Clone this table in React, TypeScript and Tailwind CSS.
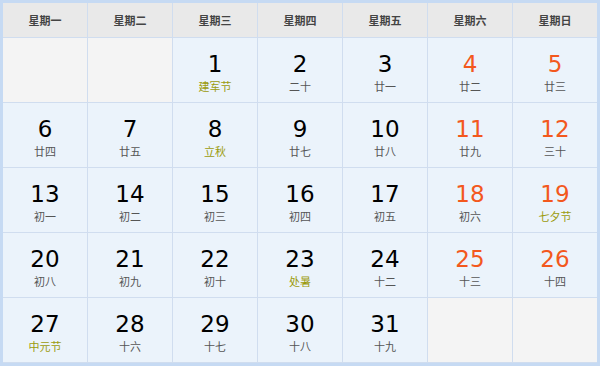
import React from "react";

type Cell = { d?: number; l?: string; fest?: boolean; wk?: boolean };

const rows: Cell[][] = [
  [{}, {}, { d: 1, l: "建军节", fest: true }, { d: 2, l: "二十" }, { d: 3, l: "廿一" }, { d: 4, l: "廿二", wk: true }, { d: 5, l: "廿三", wk: true }],
  [{ d: 6, l: "廿四" }, { d: 7, l: "廿五" }, { d: 8, l: "立秋", fest: true }, { d: 9, l: "廿七" }, { d: 10, l: "廿八" }, { d: 11, l: "廿九", wk: true }, { d: 12, l: "三十", wk: true }],
  [{ d: 13, l: "初一" }, { d: 14, l: "初二" }, { d: 15, l: "初三" }, { d: 16, l: "初四" }, { d: 17, l: "初五" }, { d: 18, l: "初六", wk: true }, { d: 19, l: "七夕节", fest: true, wk: true }],
  [{ d: 20, l: "初八" }, { d: 21, l: "初九" }, { d: 22, l: "初十" }, { d: 23, l: "处暑", fest: true }, { d: 24, l: "十二" }, { d: 25, l: "十三", wk: true }, { d: 26, l: "十四", wk: true }],
  [{ d: 27, l: "中元节", fest: true }, { d: 28, l: "十六" }, { d: 29, l: "十七" }, { d: 30, l: "十八" }, { d: 31, l: "十九" }, {}, {}],
];

const heads = ["星期一", "星期二", "星期三", "星期四", "星期五", "星期六", "星期日"];

export default function App() {
  return (
    <div className="w-[600px] h-[366px] bg-[#c6daf3] p-[3px] font-['Noto_Sans_CJK_SC',sans-serif]">
      <div className="grid grid-cols-7 grid-rows-[34px_repeat(5,64px)] gap-px bg-[#d0ddef] h-full">
        {heads.map((h) => (
          <div key={h} className="bg-[#e9e9e9] flex items-center justify-center text-[11px] font-bold text-[#444]">
            {h}
          </div>
        ))}
        {rows.flat().map((c, i) =>
          c.d ? (
            <div key={i} className="bg-[#ebf3fb] flex flex-col items-center pt-[13px]">
              <div
                className={`font-['DejaVu_Sans',sans-serif] text-[23px] leading-[26px] ${c.wk ? "text-[#f3581d]" : "text-black"}`}
              >
                {c.d}
              </div>
              <div className={`text-[11px] leading-[16px] mt-[1px] ${c.fest ? "text-[#9b9b0c]" : "text-[#555]"}`}>{c.l}</div>
            </div>
          ) : (
            <div key={i} className="bg-[#f4f4f4]" />
          )
        )}
      </div>
    </div>
  );
}
